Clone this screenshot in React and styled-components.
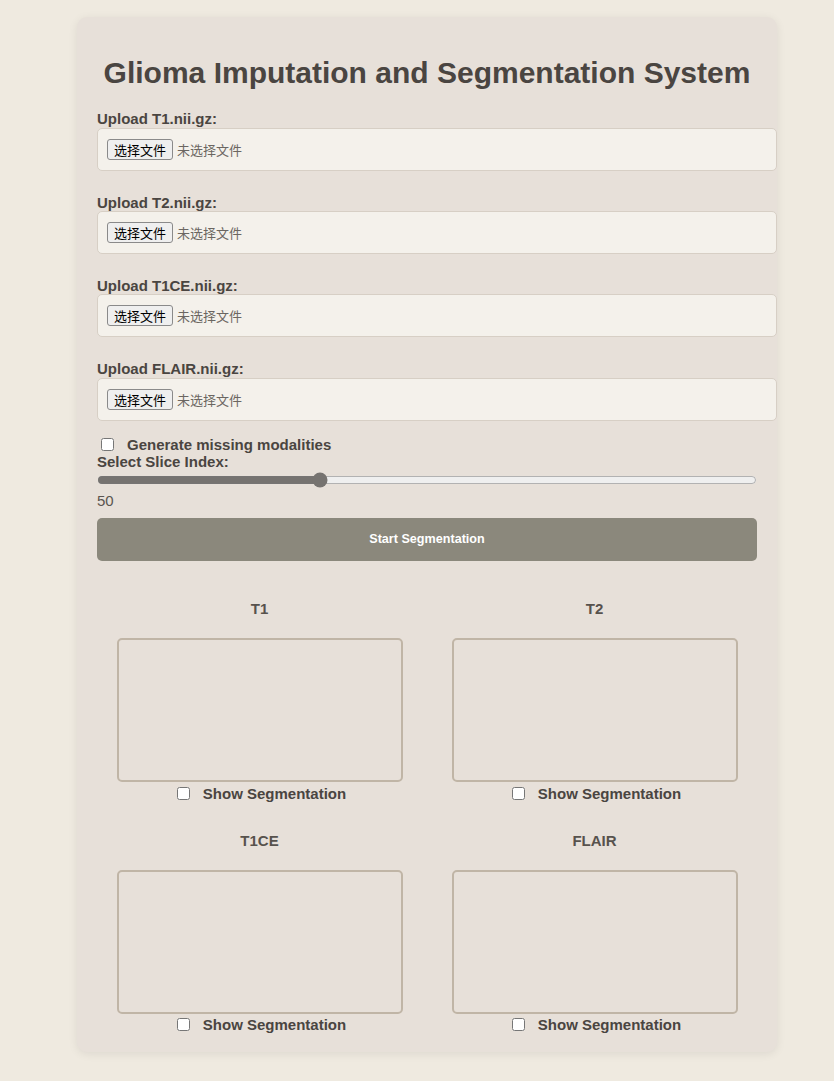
import React, { useState } from "react";
import styled, { createGlobalStyle } from "styled-components";

const GlobalStyle = createGlobalStyle`
  html, body {
    margin: 0;
    padding: 0;
    background: #efeae0;
    font-family: "Liberation Sans", Arial, sans-serif;
    font-size: 15px;
  }
  * { box-sizing: border-box; }
`;

const Card = styled.div`
  width: 700px;
  margin: 17px 0 29px 77px;
  padding: 20px 20px 18.15px;
  background: #e7e0d9;
  border-radius: 10px;
  box-shadow: 0 2px 10px rgba(0, 0, 0, 0.08);
`;

const Title = styled.h1`
  margin: 18.5px 0 20.4px;
  font-size: 30px;
  font-weight: bold;
  line-height: 34.5px;
  color: #4a4541;
  text-align: center;
  white-space: nowrap;
`;

const Uploads = styled.div`
  display: flex;
  flex-direction: column;
  gap: 23.05px;
`;

const FieldLabel = styled.label`
  display: block;
  font-size: 15px;
  font-weight: bold;
  line-height: 17.25px;
  color: #4a4541;
`;

const FileBox = styled.label`
  display: flex;
  align-items: center;
  width: calc(100% + 20px);
  height: 43px;
  padding: 0 9px;
  background: #f4f1eb;
  border: 1px solid #d7cfc5;
  border-radius: 5px;
  cursor: pointer;
  input { display: none; }
`;

const FileButton = styled.span`
  display: inline-block;
  height: 21px;
  padding: 1px 6px;
  margin-right: 4px;
  font-family: "Noto Sans CJK SC", sans-serif;
  font-size: 13px;
  line-height: 17px;
  color: #000;
  background: #efefef;
  border: 1px solid #8a8a8a;
  border-radius: 3px;
`;

const FileText = styled.span`
  font-family: "Noto Sans CJK SC", sans-serif;
  font-size: 13px;
  line-height: 17px;
  color: #6b6661;
`;

const CheckRow = styled.label`
  display: flex;
  align-items: center;
  justify-content: ${(p) => (p.$center ? "center" : "flex-start")};
  height: ${(p) => (p.$tall ? 17.7 : 17.25)}px;
  margin-top: ${(p) => p.$mt || 0}px;
  font-size: 15px;
  font-weight: bold;
  color: #4a4541;
  input {
    width: 13px;
    height: 13px;
    margin: 0 13px 0 4px;
  }
`;

const Range = styled.input`
  display: block;
  width: 100%;
  height: 16px;
  margin: 1.65px 0 4.1px;
  accent-color: #767370;
`;

const Value = styled.div`
  font-size: 15px;
  line-height: 17.25px;
  color: #5a5550;
  margin-bottom: 9px;
`;

const StartButton = styled.button`
  display: block;
  width: 100%;
  height: 42.4px;
  padding: 0;
  border: none;
  border-radius: 5px;
  background: #8b887c;
  color: #fff;
  font-family: "Liberation Sans", Arial, sans-serif;
  font-size: 12.6px;
  font-weight: bold;
  cursor: pointer;
`;

const Grid = styled.div`
  display: grid;
  grid-template-columns: 1fr 1fr;
  column-gap: 10px;
  row-gap: 10.05px;
  margin-top: 19.65px;
`;

const Cell = styled.div`
  padding-top: 20px;
  text-align: center;
`;

const CellTitle = styled.h3`
  margin: 0 0 20.35px;
  font-size: 15px;
  font-weight: bold;
  line-height: 17.25px;
  color: #57524d;
`;

const Canvas = styled.canvas`
  display: block;
  margin: 0 auto 2.7px;
  width: 286px;
  height: 144px;
  border: 2px solid #c0b5a6;
  border-radius: 5px;
  background: #e7e0d9;
`;

const uploads = ["T1", "T2", "T1CE", "FLAIR"];

export default function App() {
  const [slice, setSlice] = useState(50);
  return (
    <>
      <GlobalStyle />
      <Card>
        <Title>Glioma Imputation and Segmentation System</Title>
        <Uploads>
          {uploads.map((m) => (
            <div key={m}>
              <FieldLabel>Upload {m}.nii.gz:</FieldLabel>
              <FileBox>
                <input type="file" accept=".nii.gz" />
                <FileButton>选择文件</FileButton>
                <FileText>未选择文件</FileText>
              </FileBox>
            </div>
          ))}
        </Uploads>
        <CheckRow $mt={14.85} $tall>
          <input type="checkbox" />
          Generate missing modalities
        </CheckRow>
        <FieldLabel>Select Slice Index:</FieldLabel>
        <Range
          type="range"
          min={0}
          max={150}
          value={slice}
          onChange={(e) => setSlice(Number(e.target.value))}
        />
        <Value>{slice}</Value>
        <StartButton>Start Segmentation</StartButton>
        <Grid>
          {uploads.map((m) => (
            <Cell key={m}>
              <CellTitle>{m}</CellTitle>
              <Canvas width={282} height={140} />
              <CheckRow $center>
                <input type="checkbox" />
                Show Segmentation
              </CheckRow>
            </Cell>
          ))}
        </Grid>
      </Card>
    </>
  );
}
